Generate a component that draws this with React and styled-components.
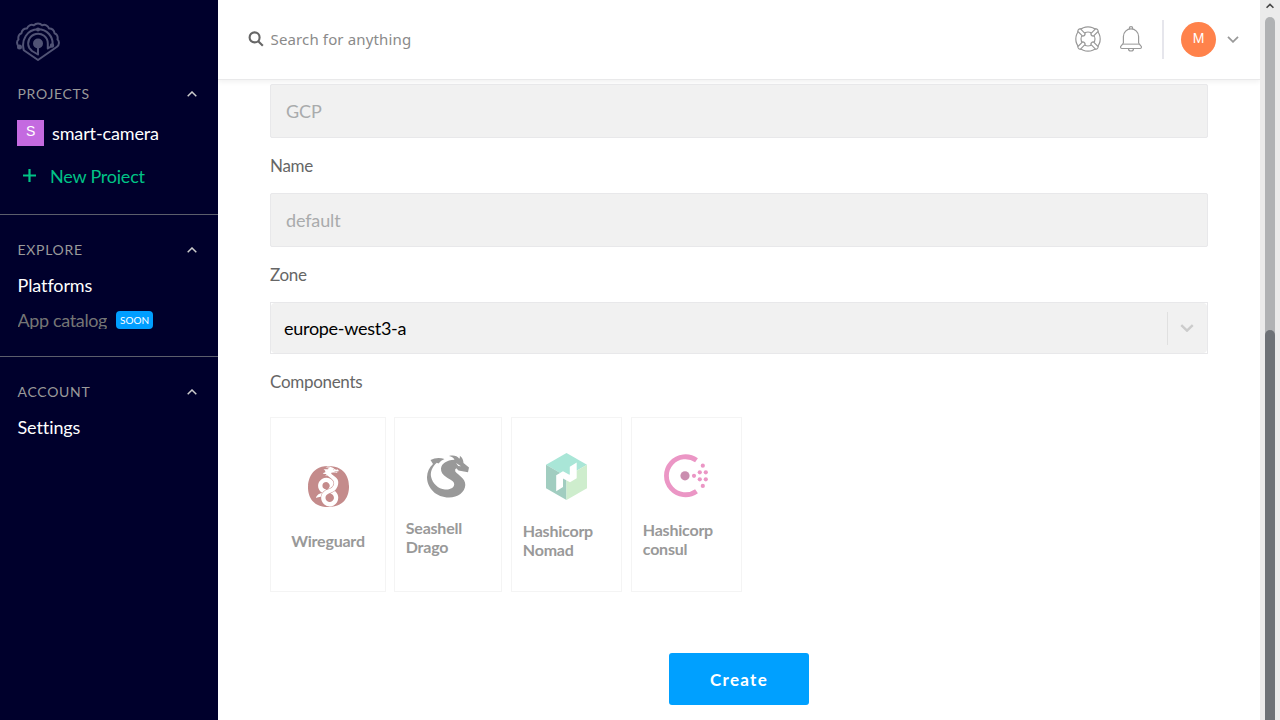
import React from "react";
import styled, { createGlobalStyle } from "styled-components";
import { SiWireguard } from "react-icons/si";

const GlobalStyle = createGlobalStyle`
  * { box-sizing: border-box; }
  body { margin: 0; background: #fff; font-family: Lato, "Liberation Sans", sans-serif; overflow: hidden; }
`;

const Page = styled.div`
  display: flex;
  height: 720px;
  width: 1280px;
  overflow: hidden;
`;

const Sidebar = styled.aside`
  width: 218px;
  flex: none;
  background: #00002c;
  color: #fff;
`;

const LogoBox = styled.div`
  height: 78px;
  padding: 22px 0 0 16px;
  svg { display: block; }
`;

const Section = styled.section`
  height: ${(p) => p.$height}px;
  padding-top: ${(p) => p.$top || 0}px;
  border-bottom: ${(p) => (p.$last ? "none" : "1px solid #5c5e6c")};
`;

const SectionHead = styled.div`
  display: flex;
  align-items: center;
  justify-content: space-between;
  height: 30px;
  padding: 0 21.5px 0 17.5px;
  font-size: 14px;
  letter-spacing: 0.7px;
  color: #9a9a9a;
  svg { margin-top: 2px; }
`;

const ProjectRow = styled.div`
  display: flex;
  align-items: center;
  gap: 8px;
  height: 27px;
  margin-top: 11px;
  padding-left: 17px;
  font-size: 18px;
  letter-spacing: -0.13px;
`;

const ProjectBadge = styled.span`
  width: 27px;
  height: 26px;
  background: #c46ae0;
  font: 14px/23px "Liberation Sans", sans-serif;
  text-align: center;
`;

const NewProject = styled.div`
  display: flex;
  align-items: center;
  gap: 14px;
  margin-top: 19px;
  height: 20px;
  padding-left: 23px;
  color: #00c386;
  font-size: 18px;
  letter-spacing: -0.22px;
  svg { margin-top: 1px; }
`;

const ClippedText = styled.span`
  height: 18px;
  line-height: ${(p) => p.$line || 20}px;
  overflow: hidden;
`;

const NavItem = styled.div`
  display: flex;
  align-items: center;
  gap: 9px;
  height: 35px;
  padding-left: 17.5px;
  font-size: 18px;
  letter-spacing: ${(p) => (p.$muted ? -0.36 : -0.1)}px;
  color: ${(p) => (p.$muted ? "#757575" : "#fff")};
`;

const NavList = styled.nav`
  padding-top: 3px;
`;

const SoonBadge = styled.span`
  width: 37px;
  height: 18px;
  border-radius: 4px;
  background: #009eff;
  color: #fff;
  font-size: 10px;
  letter-spacing: 0;
  line-height: 19px;
  text-align: center;
`;

const Main = styled.main`
  flex: 1;
  min-width: 0;
`;

const Header = styled.header`
  display: flex;
  align-items: center;
  height: 80px;
  padding: 0 21px 0 30px;
  border-bottom: 1px solid #e9e9ea;
  box-shadow: 0 2px 5px rgba(0, 0, 0, 0.06);
`;

const Search = styled.label`
  display: flex;
  align-items: center;
  gap: 6.5px;
  flex: 1;
  padding-bottom: 2px;
  color: #8a8a8a;
  font: 15px/20px "Noto Sans", sans-serif;
  letter-spacing: 0.14px;
`;

const HeaderTools = styled.div`
  display: flex;
  align-items: center;
  svg { display: block; }
`;

const ToolIcons = styled.div`
  display: flex;
  gap: 19px;
  padding-bottom: 2px;
`;

const Divider = styled.span`
  width: 2px;
  height: 39px;
  margin: 0 17px 0 20px;
  background: #e6e6ec;
`;

const Avatar = styled.span`
  width: 35px;
  height: 35px;
  margin-right: 11px;
  border-radius: 50%;
  background: #ff824b;
  color: #fff;
  font: 14px/32px "Liberation Sans", sans-serif;
  text-align: center;
`;

const Form = styled.div`
  padding: 4px 52px 0;
`;

const Field = styled.div`
  height: 54px;
  padding-left: 15px;
  border: 1px solid #e8e8ea;
  border-radius: 2px;
  background: #f1f1f1;
  color: #a9abac;
  font-size: 18px;
  letter-spacing: -0.13px;
  line-height: 53px;
`;

const Label = styled.div`
  height: ${(p) => p.$height || 55}px;
  line-height: 56px;
  font-size: 17px;
  letter-spacing: -0.3px;
  color: #666;
`;

const Select = styled.div`
  height: 52px;
  border: 1px solid #e8e8ea;
  background: #fff;
`;

const SelectBody = styled.div`
  display: flex;
  align-items: center;
  height: 50px;
  padding: 0 13px;
  border-radius: 4px;
  background: #f1f1f1;
  font-size: 18px;
  letter-spacing: -0.28px;
  color: #000;
`;

const SelectValue = styled.span`
  flex: 1;
`;

const SelectArrow = styled.span`
  display: flex;
  align-items: center;
  height: 33px;
  padding-left: 12px;
  border-left: 1px solid #e0e0e0;
`;

const Cards = styled.div`
  display: flex;
  height: 175px;
`;

const Card = styled.div`
  width: ${(p) => p.$width}px;
  margin-right: ${(p) => p.$gap}px;
  padding: ${(p) => p.$top}px 10.8px 0;
  border: 1px solid #f4f4f4;
  display: flex;
  flex-direction: column;
  align-items: center;
  svg { display: block; flex: none; }
`;

const CardName = styled.div`
  align-self: ${(p) => (p.$center ? "center" : "flex-start")};
  margin-top: ${(p) => p.$gap}px;
  font-size: 16px;
  font-weight: 700;
  letter-spacing: -0.22px;
  line-height: 19px;
  color: #999;
`;

const CreateButton = styled.button`
  display: block;
  width: 140px;
  height: 52px;
  margin: 61px auto 0;
  border: 0;
  border-radius: 3px;
  background: #00a0ff;
  color: #fff;
  font: 700 17px/54px Lato, sans-serif;
  letter-spacing: 1.3px;
  padding: 0;
`;

const Scrollbar = styled.div`
  width: 20px;
  flex: none;
  background: #ebebeb;
  display: flex;
  flex-direction: column;
  align-items: center;
`;

const ScrollArrow = styled.div`
  height: 17px;
  padding-top: 3px;
  margin-right: 1px;
  svg { display: block; }
`;

const Track = styled.div`
  width: 10px;
  flex: 1;
  padding-top: 313px;
  border-radius: 5px 5px 0 0;
  background: #b0b2b4;
`;

const Thumb = styled.div`
  height: 100%;
  border-radius: 5px 5px 0 0;
  background: #6e7277;
`;

const Chevron = ({ up, width = 10, height = 6, color = "#aaa", stroke = 1.5 }) => (
  <svg width={width} height={height} viewBox="0 0 10 6" fill="none" stroke={color} strokeWidth={stroke}>
    <path d={up ? "M.7 5.2 5 1l4.3 4.2" : "M.7.8 5 5 9.3.8"} />
  </svg>
);

const ShellLogo = () => (
  <svg width="44" height="40" viewBox="0 0 44 40" fill="none" stroke="#515375" strokeWidth="2" strokeLinecap="round" strokeLinejoin="round">
    <path d="M2.8 24.5C.5 22.500.5 19 2.500 17.500 1.800 14.500 3.200 12 5.500 11.300 5.700 8.200 8.200 6.200 11 6.500 12 3.500 15 2 17.800 3.300 20 .8 24 .8 26.200 3.300 29 2 32 3.500 33 6.500 35.800 6.200 38.300 8.200 38.500 11.300 40.800 12 42.200 14.500 41.500 17.500 43.500 19 43.500 23 41 24.800L22 38 7.800 28.200C5 18 11 7.500 22 7.300 31 7.300 37.500 14.500 36.500 23.500" />
    <path d="M36.500 23.500 31.800 26.500V21.500A9.800 9.800 0 1 0 13.200 25.800L16 29 22 32.500V22" />
    <circle cx="22" cy="21.500" r="4" fill="#515375" />
    <circle cx="3.500" cy="25" r="1.500" fill="#515375" />
    <circle cx="36" cy="23.500" r="1.200" fill="#515375" />
    <circle cx="22" cy="7.500" r="1" fill="#515375" />
  </svg>
);

const SearchIcon = () => (
  <svg width="16" height="16" viewBox="0 0 16 16" fill="none" stroke="#666" strokeWidth="2.100">
    <circle cx="6.600" cy="6.400" r="5" /><path d="m10 10 4.800 4.800" />
  </svg>
);

const Lifebuoy = () => (
  <svg width="26" height="26" viewBox="0 0 26 26" fill="none" stroke="#999" strokeWidth="1.200">
    <circle cx="13" cy="13" r="12.200" />
    <circle cx="13" cy="13" r="7" />
    {[45, 135, 225, 315].map((a) => (
      <path key={a} fill="#fff" transform={`rotate(${a} 13 13)`} d="M11.200 7.200V.2Q13-1.100 14.800.2V7.200Q13 8.700 11.200 7.200Z" />
    ))}
  </svg>
);

const Bell = () => (
  <svg width="22" height="26" viewBox="0 0 22 26" fill="none" stroke="#999" strokeWidth="1.200">
    <path d="M9.300 3V2.300a1.700 1.700 0 0 1 3.400 0V3M3.400 17.200V10.500a7.600 7.600 0 0 1 15.200 0v6.700l2.700 3.200q.4 2.100-1.300 2.100H2Q.3 22.500.7 20.400ZM8.500 22.700a2.500 2.300 0 0 0 5 0" />
    <path d="M3 18.200h16" strokeWidth="1.500" stroke="#bbb" />
  </svg>
);

const DragoIcon = () => (
  <svg width="42" height="43" viewBox="0 0 42 43" fill="#999">
    <path d="M3.500 5Q10 1.800 17.500 4 14 5.300 11.500 8.600L9.800 7.800C5 12 3.300 17 4 21.500 5.500 28.500 11 33.800 18 34.500 23.500 35 27.300 32.500 27.200 29.300 27 26 23.500 24.800 19.500 22.300 15.500 19.800 13.800 17 14 13.500 14.500 8.500 19.500 5.300 27.500 4.800 26.500 2.500 24.500 1.500 22 1 27 0 30 1 32.300 3.800 33 3 33 2 32.800.8 35.500 2.800 36.300 5.300 36.500 8L42 12.500 41 17.300 31.500 15.500 29.300 13.300Q27.500 14 28.300 16.500C31.500 20.500 38.300 23 38.300 30 38 37 31 42.500 22 42.500 9.500 42.500 0 33.500 0 22 .2 16.500 2.300 12.500 6 9Z" />
    <path fill="#fff" d="M29 8 34 11.200 31.300 11Z" />
  </svg>
);

const NomadIcon = () => (
  <svg width="41" height="47" viewBox="0 0 41 47">
    <path fill="#a9e6d7" d="M20.500 0 41 11.700 20.500 23.500 0 11.700Z" />
    <path fill="#a1cdc0" d="M0 11.700 20.500 23.500V47L0 35.200Z" />
    <path fill="#ceedcd" d="M41 11.700 20.500 23.500V47L41 35.200Z" />
    <path fill="#fff" d="M10.200 22.300 17 18.200 23.800 22V13.800L30.700 9.500V25.200L24 29.300 17 25.500V34L10.200 38.300Z" />
  </svg>
);

const ConsulIcon = () => (
  <svg width="46" height="44" viewBox="0 0 46 44">
    <path fill="none" stroke="#eb96c5" strokeWidth="4.800" d="M32.500 6.300A19 19 0 1 0 32.500 37.200" />
    <circle cx="21" cy="21.800" r="4.600" fill="#ca8eaf" />
    {[[38.800, 11.700], [35.800, 18.300], [41.800, 18.300], [30, 21.800], [35.800, 25.300], [41.800, 25.300], [38.800, 31.900]].map(([x, y]) => (
      <circle key={`${x}-${y}`} cx={x} cy={y} r="2.100" fill="#eb96c5" />
    ))}
  </svg>
);

export default function App() {
  return (
    <Page>
      <GlobalStyle />
      <Sidebar>
        <LogoBox><ShellLogo /></LogoBox>
        <Section $height={137}>
          <SectionHead>PROJECTS<Chevron up color="#ccc" /></SectionHead>
          <ProjectRow><ProjectBadge>S</ProjectBadge>smart-camera</ProjectRow>
          <NewProject>
            <svg width="13" height="13" viewBox="0 0 13 13" stroke="#00c386" strokeWidth="2.200"><path d="M6.500 0v13M0 6.500h13" /></svg>
            <ClippedText>New Project</ClippedText>
          </NewProject>
        </Section>
        <Section $height={142} $top={19}>
          <SectionHead>EXPLORE<Chevron up color="#ccc" /></SectionHead>
          <NavList>
            <NavItem>Platforms</NavItem>
            <NavItem $muted><ClippedText $line={18}>App catalog</ClippedText><SoonBadge>SOON</SoonBadge></NavItem>
          </NavList>
        </Section>
        <Section $height={120} $top={19} $last>
          <SectionHead>ACCOUNT<Chevron up color="#ccc" /></SectionHead>
          <NavList>
            <NavItem>Settings</NavItem>
          </NavList>
        </Section>
      </Sidebar>
      <Main>
        <Header>
          <Search><SearchIcon />Search for anything</Search>
          <HeaderTools>
            <ToolIcons>
              <Lifebuoy />
              <Bell />
            </ToolIcons>
            <Divider />
            <Avatar>M</Avatar>
            <Chevron width={12} height={7} color="#999" />
          </HeaderTools>
        </Header>
        <Form>
          <Field>GCP</Field>
          <Label>Name</Label>
          <Field>default</Field>
          <Label>Zone</Label>
          <Select>
            <SelectBody>
              <SelectValue>europe-west3-a</SelectValue>
              <SelectArrow><Chevron width={14} height={8} color="#ccc" stroke={1.8} /></SelectArrow>
            </SelectBody>
          </Select>
          <Label $height={63}>Components</Label>
          <Cards>
            <Card $width={116} $gap={8} $top={47.5}>
              <SiWireguard size={41} color="#c48b8b" />
              <CardName $center $gap={24.5}>Wireguard</CardName>
            </Card>
            <Card $width={108} $gap={9} $top={37}>
              <DragoIcon />
              <CardName $gap={20}>Seashell<br />Drago</CardName>
            </Card>
            <Card $width={111} $gap={9} $top={35}>
              <NomadIcon />
              <CardName $gap={21}>Hashicorp<br />Nomad</CardName>
            </Card>
            <Card $width={111} $gap={0} $top={36}>
              <ConsulIcon />
              <CardName $gap={22}>Hashicorp<br />consul</CardName>
            </Card>
          </Cards>
          <CreateButton>Create</CreateButton>
        </Form>
      </Main>
      <Scrollbar>
        <ScrollArrow><Chevron up width={8} height={6} color="#444" stroke={2} /></ScrollArrow>
        <Track><Thumb /></Track>
      </Scrollbar>
    </Page>
  );
}
